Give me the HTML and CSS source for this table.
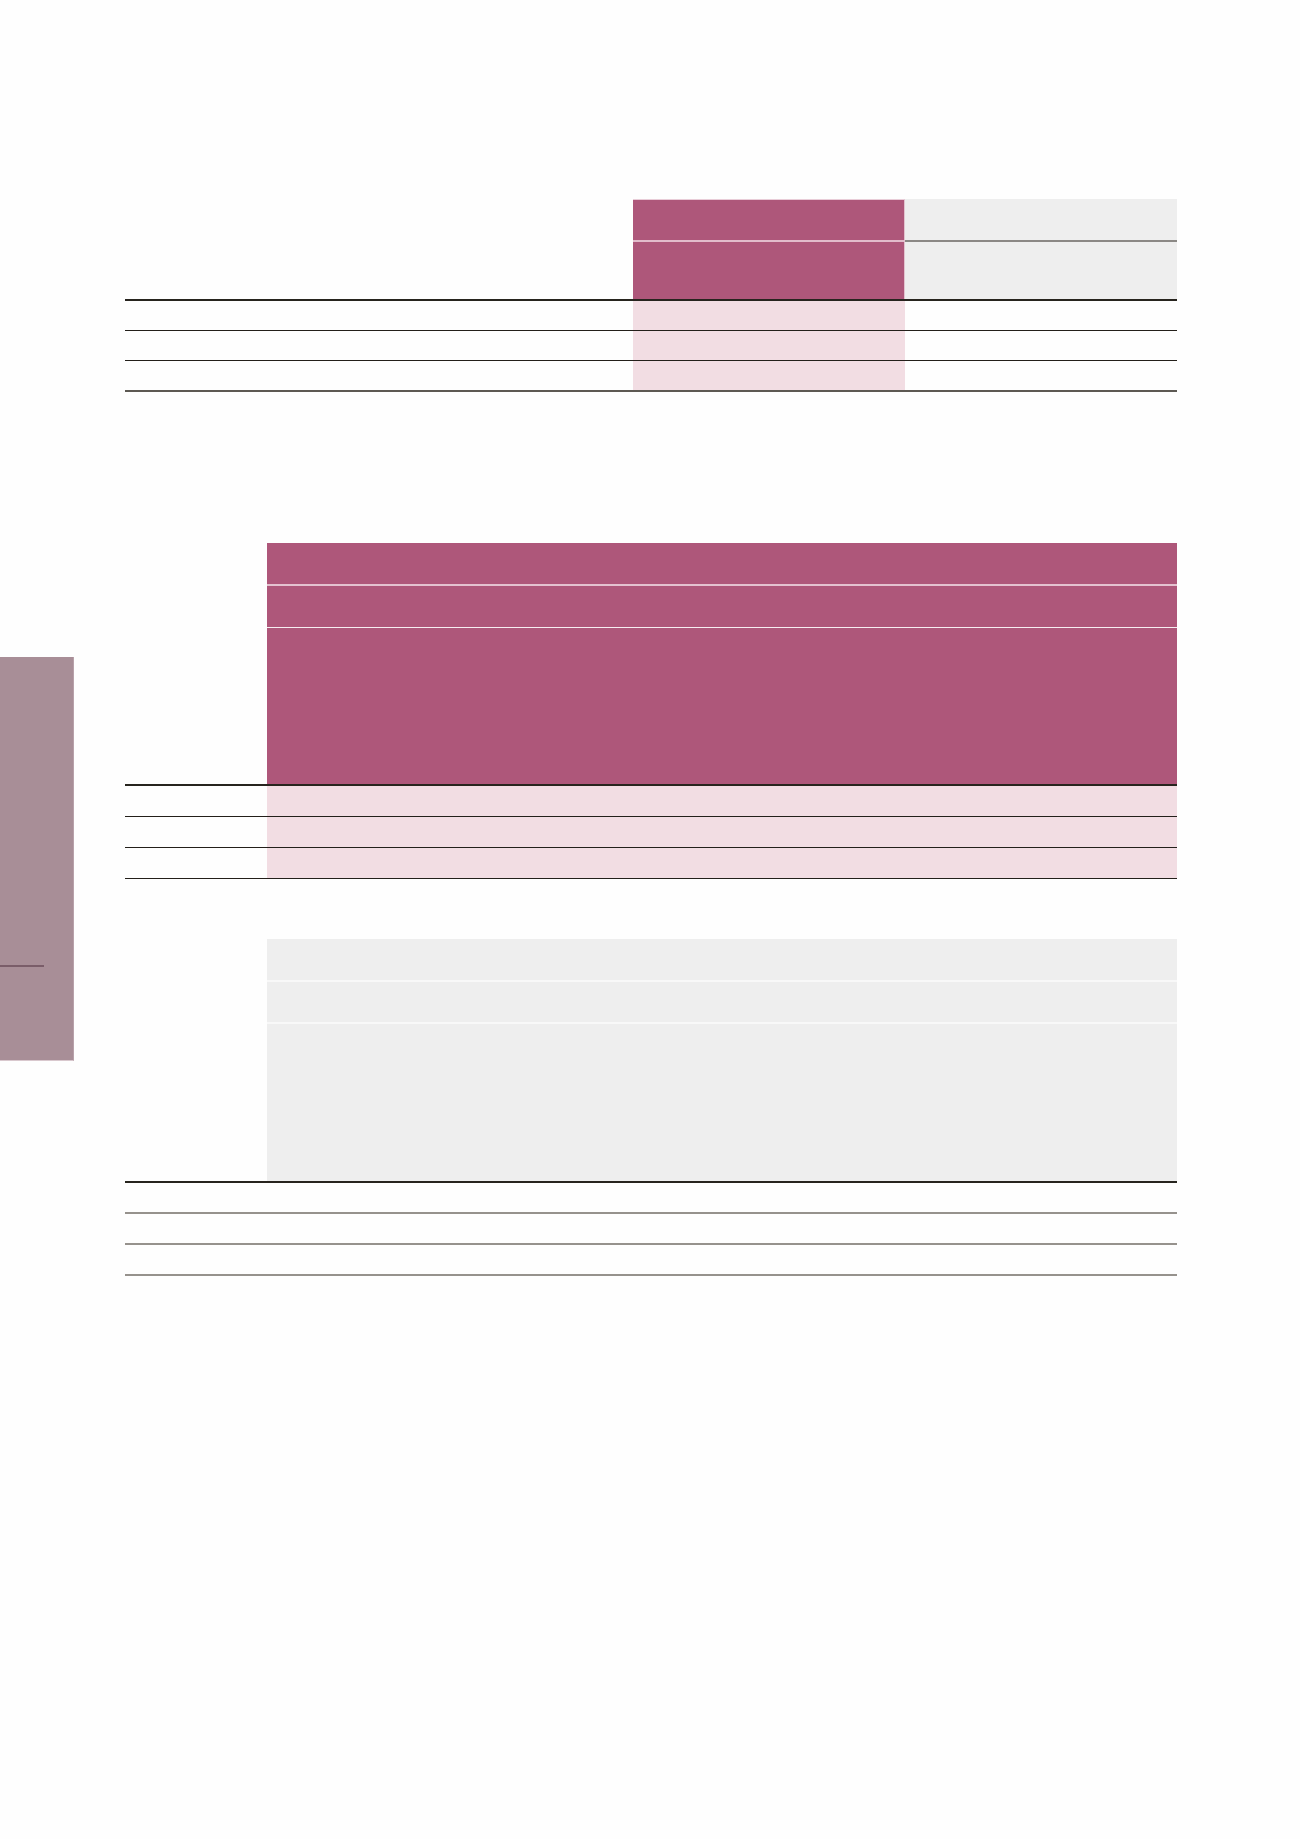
FILE: index.html
```html
<!DOCTYPE html>
<html lang="en">
<head>
<meta charset="utf-8">
<title>Tables</title>
<link rel="stylesheet" href="styles.css">
</head>
<body>
<div class="page">
  <aside class="side">
    <div class="side-tab"><div class="side-mark"></div></div>
  </aside>
  <main class="content">
    <section class="t1">
      <div class="row h1">
        <div class="c lab1"></div>
        <div class="c pur sep-pink w272"></div>
        <div class="c gry sep-grey grow"></div>
      </div>
      <div class="row h2 dark-bottom">
        <div class="c lab1"></div>
        <div class="c pur w136"></div>
        <div class="c pur w136"></div>
        <div class="c gry w136"></div>
        <div class="c gry grow"></div>
      </div>
      <div class="row d thin">
        <div class="c lab1"></div>
        <div class="c pink w272"></div>
        <div class="c grow"></div>
      </div>
      <div class="row d thin">
        <div class="c lab1"></div>
        <div class="c pink w272"></div>
        <div class="c grow"></div>
      </div>
      <div class="row d last">
        <div class="c lab1"></div>
        <div class="c pink w272"></div>
        <div class="c grow"></div>
      </div>
    </section>

    <section class="t2">
      <div class="row r1">
        <div class="c lab2"></div>
        <div class="c pur sep-pink2 grow"></div>
      </div>
      <div class="row r2">
        <div class="c lab2"></div>
        <div class="c pur sep-white grow"></div>
      </div>
      <div class="row r3 dark-bottom">
        <div class="c lab2"></div>
        <div class="c pur grow"></div>
      </div>
      <div class="row d2 thin">
        <div class="c lab2"></div>
        <div class="c pink grow"></div>
      </div>
      <div class="row d2 thin">
        <div class="c lab2"></div>
        <div class="c pink grow"></div>
      </div>
      <div class="row d2 thin">
        <div class="c lab2"></div>
        <div class="c pink grow"></div>
      </div>
    </section>

    <section class="t3">
      <div class="row r1">
        <div class="c lab2"></div>
        <div class="c gry sep-light grow"></div>
      </div>
      <div class="row r2">
        <div class="c lab2"></div>
        <div class="c gry sep-light grow"></div>
      </div>
      <div class="row r3b dark-bottom">
        <div class="c lab2"></div>
        <div class="c gry grow"></div>
      </div>
      <div class="row d2 greyline">
        <div class="c lab2"></div>
        <div class="c grow"></div>
      </div>
      <div class="row d2 greyline">
        <div class="c lab2"></div>
        <div class="c grow"></div>
      </div>
      <div class="row d2 greyline">
        <div class="c lab2"></div>
        <div class="c grow"></div>
      </div>
    </section>
  </main>
</div>
</body>
</html>
```

FILE: styles.css
```css
* { box-sizing: border-box; }

html, body {
  margin: 0;
  padding: 0;
  background: #fefefe;
  font-family: "Liberation Sans", Arial, sans-serif;
}

.page {
  display: flex;
  width: 1300px;
  min-height: 1839px;
}

.side {
  width: 125px;
  flex: 0 0 125px;
}

.side-tab {
  margin-top: 657px;
  width: 74px;
  height: 404px;
  background: #a88e97;
  border-right: 1px solid #b8a1aa;
  border-bottom: 1px solid #d9c8ce;
  padding-top: 308px;
}

.side-mark {
  width: 44px;
  height: 2px;
  background: #7a5d69;
}

.content {
  width: 1052px;
  padding-top: 199px;
}

.row {
  display: flex;
  width: 1052px;
}

.c { height: 100%; }

.grow { flex: 1 1 auto; }
.lab1 { width: 508px; flex: 0 0 508px; }
.lab2 { width: 142px; flex: 0 0 142px; }
.w272 { width: 272px; flex: 0 0 272px; }
.w136 { width: 136px; flex: 0 0 136px; }

.pur { background: #ae577a; }
.gry { background: #eeeeee; }
.pink { background: #f2dde3; }

/* table 1 */
.t1 .h1 { height: 43px; }
.t1 .h1 .pur { border-top: 1px solid #e9cdd8; border-right: 1px solid #e3c3cf; }
.t1 .h2 .pur:nth-child(3) { border-right: 1px solid #e3c3cf; }
.t1 .h2 { height: 59px; }
.sep-pink { border-bottom: 2px solid #e2bccb; }
.sep-grey { border-bottom: 2px solid #8b8885; }

.dark-bottom { border-bottom: 2px solid #27241e; }

.t1 .d { height: 30px; }
.thin { border-bottom: 1px solid #231f1a; }
.t1 .last { height: 31px; border-bottom: 2px solid #5d5953; }

/* table 2 */
.t2 { margin-top: 151px; }
.t2 .r1 { height: 43px; }
.t2 .r2 { height: 42px; }
.t2 .r3 { height: 158px; }
.sep-pink2 { border-bottom: 2px solid #e4c2d0; }
.sep-white { border-bottom: 1px solid #f7eef2; }
.d2 { height: 31px; }

/* table 3 */
.t3 { margin-top: 60px; }
.t3 .r1 { height: 43px; }
.t3 .r2 { height: 42px; }
.t3 .r3b { height: 159px; }
.sep-light { border-bottom: 2px solid #f8f8f8; }
.greyline { border-bottom: 2px solid #96928d; }
```
